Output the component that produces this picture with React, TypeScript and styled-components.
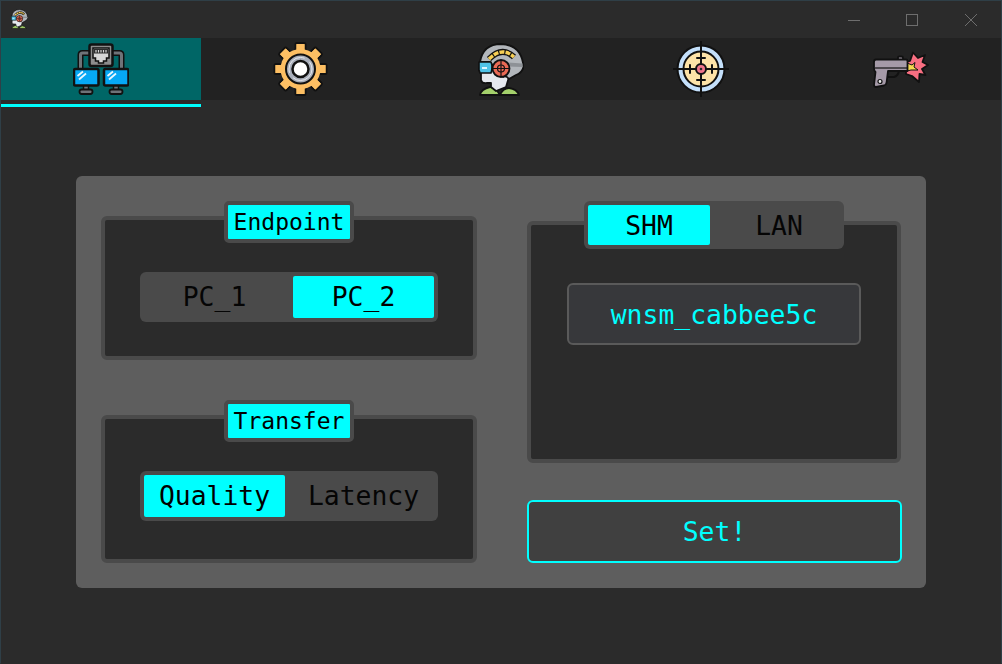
import React from "react";
import styled, { createGlobalStyle } from "styled-components";

const CYAN = "#00ffff";
const INK = "#050505";

const Global = createGlobalStyle`
  html, body { margin: 0; padding: 0; background: #2b2b2b; }
  * { box-sizing: border-box; }
`;

const Window = styled.div`
  width: 1002px;
  height: 664px;
  border: 1px solid #2f3f47;
  border-bottom-color: #2b2b2b;
  background: #2b2b2b;
  font-family: "DejaVu Sans Mono", "Liberation Mono", monospace;
  display: flex;
  flex-direction: column;
  overflow: hidden;
`;

const TitleBar = styled.div`
  height: 37px;
  flex: none;
  display: flex;
  align-items: center;
  justify-content: space-between;
  padding-left: 10px;
`;

const AppIcon = styled.div`
  display: flex;
  margin-top: -1px;
`;

const Controls = styled.div`
  display: flex;
  padding-right: 1px;
`;

const ControlButton = styled.div`
  width: 58.5px;
  height: 37px;
  display: flex;
  align-items: center;
  justify-content: center;
`;

const TabStrip = styled.div`
  height: 69px;
  flex: none;
  display: flex;
`;

const Tab = styled.div`
  width: 200px;
  display: flex;
  flex-direction: column;
`;

const TabFace = styled.div<{ $active?: boolean }>`
  height: 62px;
  display: flex;
  align-items: center;
  justify-content: center;
  background: ${(p) => (p.$active ? "#006666" : "#222222")};
`;

const TabLine = styled.div<{ $active?: boolean }>`
  height: 3px;
  margin-top: 4px;
  background: ${(p) => (p.$active ? CYAN : "transparent")};
`;

const Main = styled.div`
  flex: 1;
  padding: 69px 0 0 75px;
`;

const Panel = styled.div`
  width: 850px;
  height: 412px;
  background: #5e5e5e;
  border-radius: 6px;
  padding: 40px 24px 25px 25px;
  display: grid;
  grid-template-columns: 376px 375px;
  column-gap: 50px;
`;

const Column = styled.div`
  display: flex;
  flex-direction: column;
`;

const LeftColumn = styled(Column)`
  gap: 55px;
`;

const RightColumn = styled(Column)`
  padding-top: 5px;
  gap: 37px;
`;

const Group = styled.div<{ $h: number; $w?: number }>`
  position: relative;
  height: ${(p) => p.$h}px;
  width: ${(p) => p.$w ?? 376}px;
  background: #2b2b2b;
  border: 4px solid #4a4a4a;
  border-radius: 6px;
  display: flex;
  flex-direction: column;
  align-items: center;
`;

const GroupLabel = styled.div`
  position: absolute;
  top: -19px;
  left: 119px;
  width: 130px;
  height: 42px;
  border: 4px solid #4a4a4a;
  border-radius: 5px;
  background: ${CYAN};
  color: #000;
  font-size: 23px;
  line-height: 35px;
  text-align: center;
`;

const Segments = styled.div`
  display: inline-flex;
  gap: 8px;
  padding: 4px;
  border-radius: 6px;
  background: #4a4a4a;
`;

const CenteredSegments = styled(Segments)`
  margin-top: 52px;
`;

const TopSegments = styled(Segments)`
  position: absolute;
  top: -24px;
  left: 53px;
  width: 260px;
`;

const Segment = styled.div<{ $on?: boolean; $h?: number; $w?: number }>`
  width: ${(p) => p.$w ?? 141}px;
  height: ${(p) => p.$h ?? 42}px;
  border-radius: 2px;
  background: ${(p) => (p.$on ? CYAN : "transparent")};
  color: ${(p) => (p.$on ? "#000" : INK)};
  font-size: 26.4px;
  line-height: 41px;
  text-align: center;
`;

const NameField = styled.div`
  width: 294px;
  height: 62px;
  margin-top: 58px;
  border: 2px solid #5a5a5a;
  border-radius: 6px;
  background: #37383b;
  color: ${CYAN};
  font-size: 26.4px;
  line-height: 59px;
  text-align: center;
`;

const SetButton = styled.button`
  width: 375px;
  height: 63px;
  padding: 0;
  border: 2px solid ${CYAN};
  border-radius: 6px;
  background: #404040;
  color: ${CYAN};
  font-family: inherit;
  font-size: 26.4px;
  text-align: center;
`;

const Line = "#111";

const NetworkIcon = () => (
  <svg width="56" height="52" viewBox="0 0 56 52">
    <g fill="none" strokeLinejoin="round">
      <path d="M17 10H9.500Q7.500 10 7.500 12V27M39 10H46.500Q48.500 10 48.500 12V27" stroke={Line} strokeWidth="6" />
      <path d="M17 10H9.500Q7.500 10 7.500 12V27M39 10H46.500Q48.500 10 48.500 12V27" stroke="#6f7378" strokeWidth="3" />
    </g>
    <rect x="16.500" y="1.500" width="23" height="21.500" rx="2" fill="#8d8d8d" stroke={Line} strokeWidth="2.500" />
    <path d="M20 5H36V15H33.500V18H30.500V20H25.500V18H22.500V15H20Z" fill="#d8d8d8" stroke={Line} strokeWidth="1.500" />
    <path d="M21 6H35V10.500H21Z" fill="#2d2d2d" />
    <path d="M23 7V9.500M25.500 7V9.500M28 7V9.500M30.500 7V9.500M33 7V9.500" stroke="#d8d8d8" strokeWidth="1.200" />
    {[0, 30].map((x) => (
      <g key={x} transform={`translate(${x} 0)`}>
        <rect x="10.500" y="42" width="5" height="5" fill="#6f7378" stroke={Line} strokeWidth="1.500" />
        <rect x="6.500" y="46.500" width="13" height="4.500" rx="2.200" fill="#6f7378" stroke={Line} strokeWidth="1.800" />
        <rect x="1" y="26" width="24.500" height="16.500" rx="1.500" fill="#06a8f5" stroke={Line} strokeWidth="2.500" />
        <path d="M4.500 33L10 28.500M6 36.500L13 30.500" stroke="#eaf7ff" strokeWidth="1.800" />
      </g>
    ))}
  </svg>
);

const GearIcon = () => {
  const teeth = [0, 45, 90, 135, 180, 225, 270, 315];
  return (
    <svg width="56" height="54" viewBox="0 0 56 54">
      <g transform="translate(27.500 27)">
        {teeth.map((a) => (
          <rect key={a} x="-5" y="-26" width="10" height="12" rx="1.500" fill="#fdbf63" stroke={Line} strokeWidth="2" transform={`rotate(${a})`} />
        ))}
        <circle r="20" fill="#fdbf63" />
        {teeth.map((a) => (
          <rect key={a} x="-4" y="-25" width="8" height="12" fill="#fdbf63" transform={`rotate(${a})`} />
        ))}
        <circle r="14.500" fill="#a9afbb" stroke={Line} strokeWidth="2" />
        <circle r="11.500" fill="none" stroke="#e6e8ec" strokeWidth="1" strokeDasharray="26 6" />
        <circle r="8" fill="#ffffff" stroke={Line} strokeWidth="2.500" />
      </g>
    </svg>
  );
};

const HeadIcon = ({ w = 46, h = 53 }: { w?: number; h?: number }) => (
  <svg width={w} height={h} viewBox="0 0 46 53">
    <path d="M2 52Q3 46 12 44L18 46L22 52Z" fill="#a4d06b" stroke={Line} strokeWidth="1.800" strokeLinejoin="round" />
    <path d="M22 52Q25 45 31 45Q39 46 41 52Z" fill="#a4d06b" stroke={Line} strokeWidth="1.800" strokeLinejoin="round" />
    <path d="M4 17L1 27L3 30V37Q4 41 9 40L13 40L13 44L18 48L28 44L31 34L22 14Z" fill="#e6e9ee" stroke={Line} strokeWidth="1.800" strokeLinejoin="round" />
    <path d="M2 19Q5 1 23 1Q44 2 45.500 24Q44 30 38 32L31 36Q28 32 25 34L12 19Z" fill="#b2b6bb" stroke={Line} strokeWidth="1.800" strokeLinejoin="round" />
    <path d="M28 19.500L44.500 20.500V24L30 23.500Z" fill="#8d9196" />
    <path d="M11 16Q24 3 36 14" fill="none" stroke={Line} strokeWidth="6" />
    <path d="M11 16Q24 3 36 14" fill="none" stroke="#f7cf55" strokeWidth="3.500" strokeDasharray="5 1.200" />
    <path d="M1 19H13Q15 24 13 30H2L1 27Z" fill="#4fc3e8" stroke={Line} strokeWidth="1.600" strokeLinejoin="round" />
    <path d="M4 25H9" stroke="#ddf5ff" strokeWidth="2" />
    <circle cx="23" cy="25.500" r="8.500" fill="#ea6a55" stroke={Line} strokeWidth="1.800" />
    <circle cx="23" cy="25.500" r="3.500" fill="none" stroke={Line} strokeWidth="1.200" />
    <path d="M23 17V34M14.500 25.500H31.500" stroke={Line} strokeWidth="1.200" />
  </svg>
);

const TargetIcon = () => (
  <svg width="56" height="56" viewBox="0 0 56 56">
    <circle cx="28" cy="28" r="23.500" fill="#c4e0fb" stroke={Line} strokeWidth="2" />
    <circle cx="28" cy="28" r="17.500" fill="#fde3a8" stroke={Line} strokeWidth="2" />
    <path d="M28 0V56M0 28H56" stroke={Line} strokeWidth="2" />
    <path d="M24 17H32M24 39H32M17 24V32M39 24V32" stroke={Line} strokeWidth="2" strokeLinecap="round" />
    <circle cx="28" cy="28" r="5" fill="#f0758c" stroke={Line} strokeWidth="2" />
    <circle cx="28" cy="28" r="1.300" fill="#2b2b2b" />
  </svg>
);

const GunIcon = () => (
  <svg width="56" height="37" viewBox="0 0 56 37">
    <path d="M33 11L37 10L40 1.500L45 7L52 4L49.500 11L55 14L49 18L52.500 24L46.500 23L46 31L39 25L33 23Z" fill="#f96f82" stroke={Line} strokeWidth="1.800" strokeLinejoin="round" />
    <path d="M34 12L39 14L42 11.500L41 16L45 19L38 19L34 20Z" fill="#f7d94f" stroke={Line} strokeWidth="1" strokeLinejoin="round" />
    <path d="M25 9V6.500Q25 5.500 26.500 5.500H28.500Q30 5.500 30 7V9" fill="#a59aa8" stroke={Line} strokeWidth="1.800" />
    <path d="M14 26H21Q25 25 26 20" fill="none" stroke={Line} strokeWidth="2" />
    <path d="M3 8.500H33Q34.500 8.500 34.500 10V20H15L13.500 32Q13 34 11 34.500L3 36Q1 36 1 34L2.500 21Q1 20 1 17V11Q1 8.500 3 8.500Z" fill="#a59aa8" stroke={Line} strokeWidth="1.800" strokeLinejoin="round" />
    <path d="M2 17H34" stroke={Line} strokeWidth="1.200" />
    <circle cx="7" cy="30.500" r="2" fill="#eee" stroke={Line} strokeWidth="1.200" />
  </svg>
);

const MinimizeGlyph = () => (
  <svg width="12" height="12" viewBox="0 0 12 12">
    <path d="M0 6.500H12" stroke="#6e6e6e" strokeWidth="1" />
  </svg>
);

const MaximizeGlyph = () => (
  <svg width="12" height="12" viewBox="0 0 12 12">
    <rect x="0.500" y="0.500" width="11" height="11" fill="none" stroke="#6e6e6e" strokeWidth="1" />
  </svg>
);

const CloseGlyph = () => (
  <svg width="12" height="12" viewBox="0 0 12 12">
    <path d="M0 0L12 12M12 0L0 12" stroke="#6e6e6e" strokeWidth="1" />
  </svg>
);

const tabs = [<NetworkIcon />, <GearIcon />, <HeadIcon />, <TargetIcon />, <GunIcon />];

export default function App() {
  return (
    <Window>
      <Global />
      <TitleBar>
        <AppIcon>
          <HeadIcon w={17} h={20} />
        </AppIcon>
        <Controls>
          <ControlButton><MinimizeGlyph /></ControlButton>
          <ControlButton><MaximizeGlyph /></ControlButton>
          <ControlButton><CloseGlyph /></ControlButton>
        </Controls>
      </TitleBar>
      <TabStrip>
        {tabs.map((icon, i) => (
          <Tab key={i}>
            <TabFace $active={i === 0}>{icon}</TabFace>
            <TabLine $active={i === 0} />
          </Tab>
        ))}
      </TabStrip>
      <Main>
        <Panel>
          <LeftColumn>
            <Group $h={144}>
              <GroupLabel>Endpoint</GroupLabel>
              <CenteredSegments>
                <Segment>PC_1</Segment>
                <Segment $on>PC_2</Segment>
              </CenteredSegments>
            </Group>
            <Group $h={148}>
              <GroupLabel>Transfer</GroupLabel>
              <CenteredSegments>
                <Segment $on>Quality</Segment>
                <Segment>Latency</Segment>
              </CenteredSegments>
            </Group>
          </LeftColumn>
          <RightColumn>
            <Group $h={242} $w={374}>
              <TopSegments>
                <Segment $on $w={122} $h={40}>SHM</Segment>
                <Segment $w={122} $h={40}>LAN</Segment>
              </TopSegments>
              <NameField>wnsm_cabbee5c</NameField>
            </Group>
            <SetButton>Set!</SetButton>
          </RightColumn>
        </Panel>
      </Main>
    </Window>
  );
}
